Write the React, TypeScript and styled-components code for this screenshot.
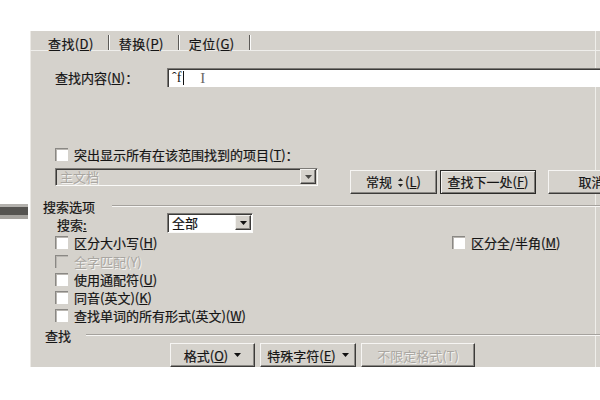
import React from "react";
import styled, { createGlobalStyle } from "styled-components";

const face = "#d5d2cc";
const font = `"Noto Sans CJK SC", "Liberation Sans", sans-serif`;

const GlobalStyle = createGlobalStyle`
  html, body {
    margin: 0;
    background: #fff;
    overflow: hidden;
  }
  body {
    font-family: ${font};
    font-size: 13px;
    color: #151515;
    -webkit-text-stroke: 0.2px;
  }
`;

const Page = styled.div`
  display: flex;
  align-items: flex-start;
  width: 600px;
  height: 400px;
  padding-top: 31px;
  box-sizing: border-box;
`;

// the dark bar peeking out from behind the dialog
const Stub = styled.div`
  width: 28px;
  height: 8px;
  margin-top: 173px;
  background: #555451;
  border-top: 3px solid #b3b1ad;
  border-bottom: 4px solid #a5a39f;
`;

const Dialog = styled.div`
  margin-left: 2px;
  width: 570px;
  height: 336px;
  background: ${face};
  box-shadow: inset 1px 0 #eceae6, inset -4px 0 ${face}, inset -5px 0 #efeeea;
  overflow: hidden;
  display: flex;
  flex-direction: column;
  line-height: 1;
`;

const TabBar = styled.div`
  display: flex;
  height: 23px;
  padding-top: 4px;
  box-sizing: border-box;
  border-bottom: 1px solid #efeeeb;
`;

const Tab = styled.div<{ $first?: boolean }>`
  display: flex;
  align-items: center;
  padding: 2px 14px 0 ${(p) => (p.$first ? 18 : 10)}px;
  letter-spacing: 0.4px;
  border-right: 1px solid #5c5a57;
  box-shadow: 1px 0 #fbfbfa;
`;

const FindRow = styled.div`
  display: grid;
  grid-template-columns: 112px 1fr;
  align-items: center;
  margin-top: 17px;
  padding-left: 25px;
`;

const TextInput = styled.div`
  height: 19px;
  box-sizing: border-box;
  background: #fff;
  border-top: 1px solid #7c7a76;
  border-left: 1px solid #7c7a76;
  box-shadow: inset 1px 1px #3c3b39;
  display: flex;
  align-items: center;
  padding-left: 4px;
  font-family: "Liberation Serif", serif;
  font-size: 14px;
  -webkit-text-stroke: 0;
`;

const Caret = styled.span`
  display: inline-block;
  width: 1px;
  height: 14px;
  margin-left: 2px;
  background: #111;
`;

const IBeam = styled.span`
  margin-left: 16px;
  color: #6a6864;
  font-size: 15px;
`;

const CheckRow = styled.div<{ $top?: number; $left?: number }>`
  display: flex;
  align-items: center;
  gap: 6px;
  height: 18px;
  margin-top: ${(p) => p.$top ?? 0}px;
  padding-left: ${(p) => p.$left ?? 0}px;
`;

const Box = styled.span<{ $disabled?: boolean }>`
  width: 13px;
  height: 13px;
  box-sizing: border-box;
  flex: none;
  background: ${(p) => (p.$disabled ? face : "#fff")};
  border-top: 1px solid #8a8884;
  border-left: 1px solid #8a8884;
  box-shadow: inset 1px 1px #b9b6b1;
`;

const Label = styled.span<{ $disabled?: boolean }>`
  white-space: nowrap;
  color: ${(p) => (p.$disabled ? "#a9a6a1" : "#151515")};
  text-shadow: ${(p) => (p.$disabled ? "1px 1px #f4f3f1" : "none")};
  -webkit-text-stroke: ${(p) => (p.$disabled ? "0" : "0.2px")};
`;

const ScopeRow = styled.div`
  display: flex;
  align-items: flex-start;
  margin-top: 6px;
  padding-left: 25px;
  height: 26px;
`;

const Combo = styled.div<{ $width: number; $height: number; $disabled?: boolean }>`
  width: ${(p) => p.$width}px;
  height: ${(p) => p.$height}px;
  box-sizing: border-box;
  flex: none;
  display: flex;
  align-items: center;
  justify-content: space-between;
  padding: 0 1px 0 4px;
  background: ${(p) => (p.$disabled ? face : "#fff")};
  border-top: 1px solid #7c7a76;
  border-left: 1px solid #7c7a76;
  border-bottom: 1px solid #fafaf8;
  border-right: 1px solid #fafaf8;
  box-shadow: inset 1px 1px #3c3b39;
`;

const ArrowButton = styled.span`
  width: 16px;
  height: 15px;
  box-sizing: border-box;
  display: flex;
  align-items: center;
  justify-content: center;
  background: ${face};
  border-top: 1px solid #f3f2ef;
  border-left: 1px solid #f3f2ef;
  border-right: 1px solid #3c3b39;
  border-bottom: 1px solid #3c3b39;
  box-shadow: inset -1px -1px #8a8884;
`;

const ButtonGroup = styled.div<{ $top?: number; $left?: number; $gap: number }>`
  display: flex;
  gap: ${(p) => p.$gap}px;
  margin-top: ${(p) => p.$top ?? 0}px;
  margin-left: ${(p) => p.$left ?? 0}px;
`;

const Button = styled.div<{ $width: number; $default?: boolean; $disabled?: boolean }>`
  width: ${(p) => p.$width}px;
  height: 24px;
  box-sizing: border-box;
  flex: none;
  display: flex;
  align-items: center;
  justify-content: center;
  gap: 6px;
  background: ${face};
  white-space: nowrap;
  color: ${(p) => (p.$disabled ? "#aaa7a2" : "#151515")};
  text-shadow: ${(p) => (p.$disabled ? "1px 1px #f4f3f1" : "none")};
  -webkit-text-stroke: ${(p) => (p.$disabled ? "0" : "0.2px")};
  border: 1px solid;
  border-color: ${(p) =>
    p.$default ? "#2a2a28" : "#f6f5f3 #3c3b39 #3c3b39 #f6f5f3"};
  box-shadow: ${(p) =>
    p.$default
      ? "inset 1px 1px #f6f5f3, inset -1px -1px #7c7a76"
      : "inset -1px -1px #8a8884"};
`;

const SectionHeader = styled.div<{ $top: number; $left: number; $gap: number }>`
  display: flex;
  align-items: center;
  height: 14px;
  margin-top: ${(p) => p.$top}px;
  padding-left: ${(p) => p.$left}px;
  gap: ${(p) => p.$gap}px;
`;

const Rule = styled.div`
  flex: 1;
  height: 0;
  margin-top: -1px;
  border-top: 1px solid #a5a29d;
  border-bottom: 1px solid #f7f6f4;
`;

const SearchRow = styled.div`
  display: grid;
  grid-template-columns: 110px auto;
  align-items: center;
  height: 20px;
  padding-left: 27px;
`;

const SearchLabel = styled.span`
  padding-top: 3px;
`;

const Options = styled.div`
  display: grid;
  grid-template-columns: 397px auto;
  grid-auto-rows: 18.25px;
  margin-top: 1px;
  padding-left: 25px;
`;

const Triangle = ({ color = "#111" }: { color?: string }) => (
  <svg width="7" height="4" viewBox="0 0 7 4">
    <polygon points="0,0 7,0 3.5,4" fill={color} />
  </svg>
);

const UpDown = () => (
  <svg width="5" height="9" viewBox="0 0 5 9" style={{ marginRight: 2 }}>
    <polygon points="2.5,0 5,3 0,3" fill="#222" />
    <polygon points="0,6 5,6 2.5,9" fill="#222" />
  </svg>
);

const Check = ({
  children,
  disabled,
}: {
  children: React.ReactNode;
  disabled?: boolean;
}) => (
  <CheckRow>
    <Box $disabled={disabled} />
    <Label $disabled={disabled}>{children}</Label>
  </CheckRow>
);

export default function App() {
  return (
    <>
      <GlobalStyle />
      <Page>
        <Stub />
        <Dialog>
          <TabBar>
            <Tab $first>
              查找(<u>D</u>)
            </Tab>
            <Tab>
              替换(<u>P</u>)
            </Tab>
            <Tab>
              定位(<u>G</u>)
            </Tab>
          </TabBar>

          <FindRow>
            <Label>
              查找内容(<u>N</u>)：
            </Label>
            <TextInput>
              ˆf
              <Caret />
              <IBeam>I</IBeam>
            </TextInput>
          </FindRow>

          <CheckRow $top={60} $left={25}>
            <Box />
            <Label>
              突出显示所有在该范围找到的项目(<u>T</u>)：
            </Label>
          </CheckRow>

          <ScopeRow>
            <Combo $width={263} $height={18} $disabled>
              <Label $disabled>主文档</Label>
              <ArrowButton>
                <Triangle color="#4a4946" />
              </ArrowButton>
            </Combo>
            <ButtonGroup $top={2} $left={32} $gap={3}>
              <Button $width={87}>
                <span>常规</span>
                <span>
                  <UpDown />(<u>L</u>)
                </span>
              </Button>
              <Button $width={96} $default>
                <span>
                  查找下一处(<u>F</u>)
                </span>
              </Button>
              <Button $width={87} style={{ marginLeft: 9 }}>
                取消
              </Button>
            </ButtonGroup>
          </ScopeRow>

          <SectionHeader $top={6} $left={13} $gap={17}>
            <span>搜索选项</span>
            <Rule />
          </SectionHeader>

          <SearchRow>
            <SearchLabel>
              搜索<u>:</u>
            </SearchLabel>
            <Combo $width={86} $height={20}>
              <span>全部</span>
              <ArrowButton>
                <Triangle />
              </ArrowButton>
            </Combo>
          </SearchRow>

          <Options>
            <Check>
              区分大小写(<u>H</u>)
            </Check>
            <Check>
              区分全/半角(<u>M</u>)
            </Check>
            <Check disabled>全字匹配(Y)</Check>
            <span />
            <Check>
              使用通配符(<u>U</u>)
            </Check>
            <span />
            <Check>
              同音(英文)(<u>K</u>)
            </Check>
            <span />
            <Check>
              查找单词的所有形式(英文)(<u>W</u>)
            </Check>
          </Options>

          <SectionHeader $top={4} $left={15} $gap={15}>
            <span>查找</span>
            <Rule />
          </SectionHeader>

          <ButtonGroup $top={1} $left={140} $gap={5}>
            <Button $width={85}>
              <span>
                格式(<u>O</u>)
              </span>
              <Triangle />
            </Button>
            <Button $width={96}>
              <span>
                特殊字符(<u>E</u>)
              </span>
              <Triangle />
            </Button>
            <Button $width={114} $disabled>
              不限定格式(T)
            </Button>
          </ButtonGroup>
        </Dialog>
      </Page>
    </>
  );
}
